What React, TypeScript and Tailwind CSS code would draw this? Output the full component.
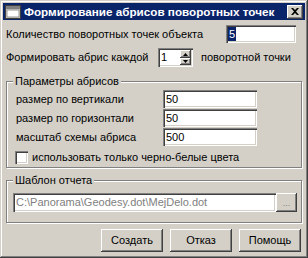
import React from 'react';

const font = "font-['Liberation_Sans',Arial,sans-serif]";
const sunken = 'bg-white shadow-[inset_1px_1px_0_#808080,inset_2px_2px_0_#404040,inset_-1px_-1px_0_#ffffff,inset_-2px_-2px_0_#d4d0c8]';
const raised = 'bg-[#d4d0c8] shadow-[inset_-1px_-1px_0_#404040,inset_1px_1px_0_#ffffff,inset_-2px_-2px_0_#808080,inset_2px_2px_0_#d4d0c8]';

const Field: React.FC<{ value: string; className?: string }> = ({ value, className }) => (
    <div className={`${sunken} h-[18px] flex items-center pl-[3px] text-black ${className ?? ''}`}>{value}</div>
);

const Group: React.FC<{ title: string; className?: string; children: React.ReactNode }> = ({ title, className, children }) => (
    <div className={`relative border border-[#808080] shadow-[1px_1px_0_#ffffff,inset_1px_1px_0_#ffffff] ${className ?? ''}`}>
        <span className="absolute -top-[8px] left-[6px] px-[2px] bg-[#d4d0c8] leading-[14px]">{title}</span>
        {children}
    </div>
);

const Button: React.FC<{ label: string }> = ({ label }) => (
    <button className={`${raised} w-[62px] h-[23px] text-[11px] text-black`}>{label}</button>
);

export default function App() {
    return (
        <div className={`${font} w-[308px] h-[258px] flex flex-col p-[3px] bg-[#d4d0c8] text-[11px] text-black shadow-[inset_-1px_-1px_0_#404040,inset_1px_1px_0_#d4d0c8,inset_-2px_-2px_0_#808080,inset_2px_2px_0_#ffffff]`}>
            {/* title bar */}
            <div className="h-[17px] bg-[#0a246a] flex items-center pl-[2px] pr-[2px]">
                <svg width="16" height="14" viewBox="0 0 16 14" className="shrink-0">
                    <rect x="0.5" y="0.5" width="15" height="13" fill="#d4d0c8" stroke="#404040" />
                    <rect x="1" y="1" width="14" height="3" fill="#808080" />
                    <rect x="2" y="5" width="12" height="7" fill="#ffffff" />
                    <rect x="2" y="5" width="12" height="7" fill="none" stroke="#808080" strokeWidth="0.8" />
                </svg>
                <span className="ml-[3px] text-white font-bold text-[11.7px] leading-none whitespace-nowrap">Формирование абрисов поворотных точек</span>
                <div className={`${raised} ml-auto w-[16px] h-[14px] flex items-center justify-center`}>
                    <svg width="8" height="7" viewBox="0 0 8 7">
                        <path d="M0 0h2l2 2 2-2h2L5 3.5 8 7H6L4 5 2 7H0l3-3.5z" fill="#000" />
                    </svg>
                </div>
            </div>

            <div className="flex flex-col px-[3px]">
                {/* row 1 */}
                <div className="mt-[5px] h-[18px] flex items-center">
                    <span className="whitespace-nowrap">Количество поворотных точек объекта</span>
                    <div className={`${sunken} ml-auto mr-[6px] w-[70px] h-[18px] flex items-center pl-[2px]`}>
                        <span className="bg-[#0a246a] text-white leading-[14px] px-[1px]">5</span>
                    </div>
                </div>

                {/* row 2 */}
                <div className="mt-[5px] h-[19px] flex items-center">
                    <span className="w-[152px] whitespace-nowrap">Формировать абрис каждой</span>
                    <div className={`${sunken} w-[35px] h-[19px] flex items-center pl-[3px] pr-[2px]`}>
                        <span className="flex-1">1</span>
                        <div className="flex flex-col w-[11px]">
                            <div className={`${raised} h-[8px] flex items-center justify-center`}>
                                <svg width="5" height="3" viewBox="0 0 5 3"><path d="M2.5 0L5 3H0z" fill="#000" /></svg>
                            </div>
                            <div className={`${raised} h-[7px] flex items-center justify-center`}>
                                <svg width="5" height="3" viewBox="0 0 5 3"><path d="M0 0h5L2.5 3z" fill="#000" /></svg>
                            </div>
                        </div>
                    </div>
                    <span className="ml-[8px] whitespace-nowrap">поворотной точки</span>
                </div>

                {/* group 1 */}
                <Group title="Параметры абрисов" className="mt-[14px] pt-[8px] pl-[9px] pb-[3px]">
                    <div className="flex flex-col gap-[1px]">
                        <div className="flex items-center h-[18px]">
                            <span className="w-[147px]">размер по вертикали</span>
                            <Field value="50" className="w-[94px]" />
                        </div>
                        <div className="flex items-center h-[18px]">
                            <span className="w-[147px]">размер по горизонтали</span>
                            <Field value="50" className="w-[94px]" />
                        </div>
                        <div className="flex items-center h-[18px]">
                            <span className="w-[147px]">масштаб схемы абриса</span>
                            <Field value="500" className="w-[94px]" />
                        </div>
                    </div>
                    <div className="mt-[5px] h-[13px] flex items-center -ml-[1px]">
                        <div className={`${sunken} w-[13px] h-[13px]`} />
                        <span className="ml-[4px] whitespace-nowrap">использовать только черно-белые цвета</span>
                    </div>
                </Group>

                {/* group 2 */}
                <Group title="Шаблон отчета" className="mt-[12px] pt-[12px] pl-[6px] pb-[10px]">
                    <div className="flex items-center">
                        <div className={`${sunken} w-[263px] h-[19px] flex items-center pl-[3px] text-[#808080] whitespace-nowrap overflow-hidden`}>
                            C:\Panorama\Geodesy.dot\MejDelo.dot
                        </div>
                        <div className={`${raised} w-[21px] h-[19px] flex items-end justify-center pb-[4px] text-[#808080] text-[9px] leading-none`}>...</div>
                    </div>
                </Group>

                {/* buttons */}
                <div className="mt-[6px] flex justify-end gap-[7px] pr-[1px]">
                    <Button label="Создать" />
                    <Button label="Отказ" />
                    <Button label="Помощь" />
                </div>
            </div>
        </div>
    );
}
